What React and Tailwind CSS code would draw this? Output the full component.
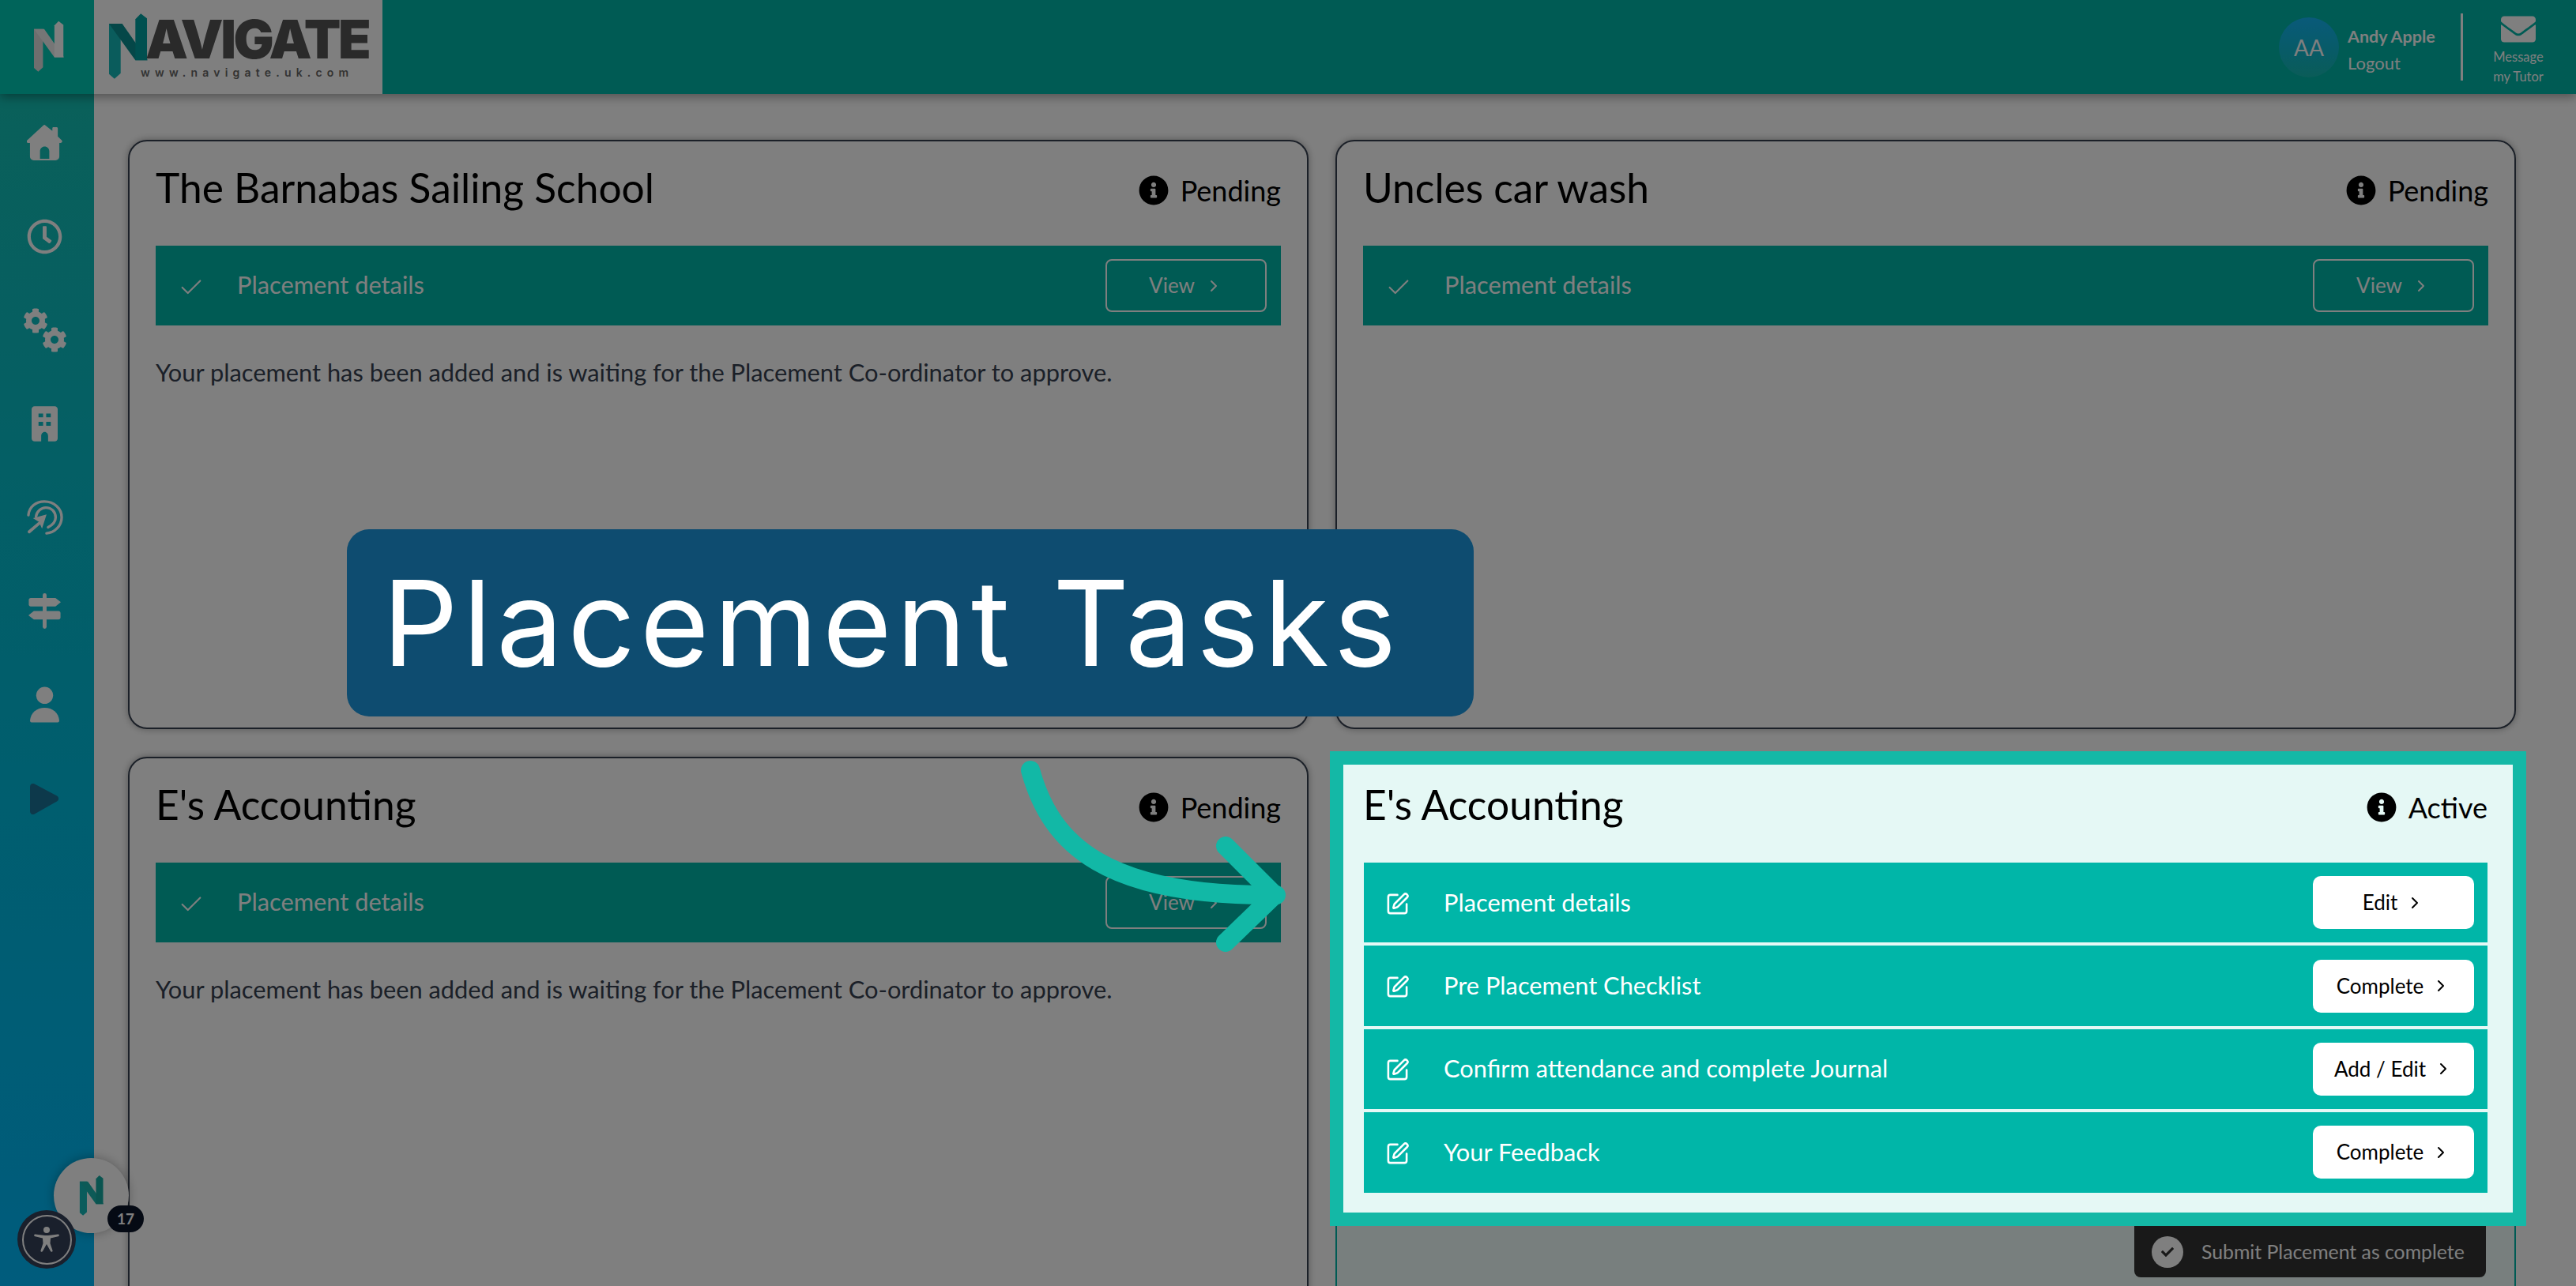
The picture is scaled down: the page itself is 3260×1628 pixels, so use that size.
import { FaRegClock, FaCog, FaInfoCircle, FaEnvelope, FaCheck } from 'react-icons/fa';
import { SquarePen, Check, ChevronRight } from 'lucide-react';

const BODY_FONT = { fontFamily: '"Lato", "Open Sans", sans-serif' };

const HomeIcon = ({ className }) => (
  <svg viewBox="0 0 46 46" className={className} fill="currentColor">
    <path d="M23 0l10 8V4.500c0-1 .8-1.500 1.500-1.500h4c.8 0 1.500.7 1.500 1.500V15l5 5c1.500 1.500.5 3.500-1.500 3.500H42V41c0 2.800-2.200 5-5 5H9c-2.800 0-5-2.200-5-5V23.500H2C0 23.500-1 21.500.5 20L21 1c.6-.6 1.300-1 2-1zM17 34v10h12V34c0-3.300-2.700-6-6-6s-6 2.700-6 6z" fillRule="evenodd" />
  </svg>
);

const CogsIcon = ({ className }) => (
  <div className={`relative h-[56px] w-[56px] ${className}`}>
    <FaCog className="absolute left-0 top-0 text-[32px]" />
    <FaCog className="absolute bottom-0 right-0 text-[32px]" />
  </div>
);

const BuildingIcon = ({ className }) => (
  <svg viewBox="0 0 34 46" className={className} fill="currentColor" fillRule="evenodd">
    <path d="M4 0h26c2.200 0 4 1.800 4 4v38c0 2.200-1.800 4-4 4H4c-2.200 0-4-1.800-4-4V4c0-2.200 1.800-4 4-4zM9 9.500v5h6v-5zM19 9.500v5h6v-5zM9 20.500v5h6v-5zM19 20.500v5h6v-5zM12.500 46h9v-7c0-3-2-5.500-4.500-5.500s-4.500 2.500-4.500 5.500z" />
  </svg>
);

const SignsIcon = ({ className }) => (
  <svg viewBox="0 0 44 46" className={className} fill="currentColor">
    <rect x="19.500" y="0" width="5" height="46" rx="2.500" />
    <path d="M4 6h32l7 5.500-7 5.500H4c-1.500 0-2.500-1-2.500-2.500v-6C1.500 7 2.500 6 4 6z" />
    <path d="M40 23H8l-7 5.500L8 34h32c1.500 0 2.500-1 2.500-2.500v-6C42.500 24 41.500 23 40 23z" />
  </svg>
);

const UserIcon = ({ className }) => (
  <svg viewBox="0 0 38 46" className={className} fill="currentColor">
    <ellipse cx="19" cy="11" rx="11" ry="11" />
    <path d="M2 46c-1.500 0-2-1-2-2.500C1 33 9 27 19 27s18 6 19 16.500c0 1.500-.5 2.500-2 2.500z" />
  </svg>
);

const PlayIcon = ({ className }) => (
  <svg viewBox="0 0 38 40" className={className} fill="currentColor">
    <path d="M0 4C0 1 2.600-.7 5 0l30 16c2.800 1.500 2.800 5.500 0 7L5 40c-2.400.8-5-1-5-4z" />
  </svg>
);

const TargetIcon = ({ className }) => (
  <svg viewBox="0 0 48 46" className={className} fill="none" stroke="currentColor" strokeLinecap="round">
    <path d="M2 20C3 9 12 2 23 2c13 0 23 9 23 21 0 11-9 20-20 21" strokeWidth="3.500" />
    <path d="M12 22c1-7 7-12 13-12 8 0 13 6 13 13 0 6-4 10-10 13" strokeWidth="3.500" />
    <path d="M3 42l13-11" strokeWidth="4" />
    <path d="M8 24l18-5-6 19-4-9z" fill="currentColor" stroke="none" />
  </svg>
);

const AccessIcon = () => (
  <svg viewBox="0 0 32 32" className="h-[38px] w-[32px] text-white" fill="currentColor">
    <circle cx="16" cy="4" r="4" />
    <path d="M1.500 9.500 14 11h4l12.500-1.500c1.800 0 1.800 2.500 0 2.800L21 14.500 20.500 21l3 9c.5 1.800-1.700 2.500-2.500 1l-5-9-5 9c-.8 1.500-3 .8-2.500-1l3-9L11 14.500 1.500 12.300c-1.800-.3-1.800-2.800 0-2.800z" />
  </svg>
);

const LogoN = ({ left, middle, right, className }) => (
  <svg viewBox="0 0 50 86" className={className}>
    <path d="M0 13h15v64l-8 7-7-6z" fill={left} />
    <path d="M0 13h17l33 47H34z" fill={middle} />
    <path d="M34 7l7-7 8 6v54H34z" fill={right} />
  </svg>
);

const navIcons = [
  { icon: HomeIcon, size: 'h-[45px] w-[45px]', color: 'text-white' },
  { icon: FaRegClock, size: 'text-[45px]', color: 'text-white' },
  { icon: CogsIcon, size: '', color: 'text-white' },
  { icon: BuildingIcon, size: 'h-[45px] w-[33px]', color: 'text-white' },
  { icon: TargetIcon, size: 'h-[44px] w-[46px]', color: 'text-white' },
  { icon: SignsIcon, size: 'h-[45px] w-[43px]', color: 'text-white' },
  { icon: UserIcon, size: 'h-[46px] w-[37px]', color: 'text-white' },
  { icon: PlayIcon, size: 'h-[39px] w-[37px]', color: 'text-[#1b7396]' },
];

const Status = ({ label }) => (
  <div className="flex items-center gap-[15px] text-[36px] leading-none text-black">
    <FaInfoCircle className="text-[38px]" />
    <span>{label}</span>
  </div>
);

const DoneRow = () => (
  <div className="flex h-[101px] items-center justify-between bg-[#00b6a8] pl-[28px] pr-[18px] text-white">
    <div className="flex items-center">
      <Check className="mt-[4px] h-[34px] w-[34px]" strokeWidth={1.500} />
      <span className="ml-[41px] text-[30.800px]">Placement details</span>
    </div>
    <button className="flex h-[67px] w-[204px] items-center justify-center gap-[12px] rounded-[8px] border-2 border-white text-[26px] text-white">
      View <ChevronRight className="h-[24px] w-[24px]" strokeWidth={2} />
    </button>
  </div>
);

const Card = ({ title, note }) => (
  <div className="h-[746px] rounded-[24px] border-2 border-[#374151] bg-white px-[33px] pt-[26px] shadow-[0_0_10px_rgba(0,0,0,0.35)]">
    <div className="flex h-[106px] items-start justify-between">
      <h2 className="text-[51.500px] leading-[64px] text-black">{title}</h2>
      <div className="pt-[17px]"><Status label="Pending" /></div>
    </div>
    <DoneRow />
    {note && <p className="mt-[40px] text-[30.800px] leading-[40px] text-[#374151]">{note}</p>}
  </div>
);

const tasks = [
  { label: 'Placement details', action: 'Edit' },
  { label: 'Pre Placement Checklist', action: 'Complete' },
  { label: 'Confirm attendance and complete Journal', action: 'Add / Edit' },
  { label: 'Your Feedback', action: 'Complete' },
];

const NOTE = 'Your placement has been added and is waiting for the Placement Co-ordinator to approve.';

export default function App() {
  return (
    <div className="relative h-screen w-full overflow-hidden bg-white" style={BODY_FONT}>
      {/* top bar */}
      <header className="relative flex h-[119px] items-stretch bg-[#00b6a8] shadow-[0_4px_12px_rgba(0,0,0,0.35)]">
        <div className="flex w-[119px] items-center justify-center bg-[#00c8b4]">
          <LogoN left="#dcdcdc" middle="#ededed" right="#ffffff" className="ml-[4px] h-[67px] w-[38px]" />
        </div>
        <div className="flex w-[365px] flex-col bg-[#ffffff] pl-[19px] pt-[17px]">
          <div className="flex h-[60px] items-start">
            <LogoN left="#14b8b8" middle="#0a8f90" right="#00a0a0" className="h-[85px] w-[49px] shrink-0" />
            <span className="-ml-[3px] mt-[2px] block h-[60px] text-[68px] font-black leading-[60px] tracking-[-3.500px] text-[#555555]" style={{ fontFamily: '"Inter", sans-serif' }}>AVIGATE</span>
          </div>
          <span className="ml-[40px] mt-[8px] block text-[14px] font-semibold leading-none tracking-[6.200px] text-[#666666]" style={{ fontFamily: '"Inter", sans-serif' }}>www.navigate.uk.com</span>
        </div>
        <div className="ml-auto flex items-center pr-[41px] text-white">
          <div className="flex h-[76px] w-[76px] items-center justify-center rounded-full bg-gradient-to-b from-[#14b4f4] to-[#16b8b0] text-[28px]">AA</div>
          <div className="ml-[11px] mt-[6px] flex w-[143px] flex-col">
            <span className="text-[21.500px] font-bold leading-[34px]">Andy Apple</span>
            <span className="text-[22px] leading-[34px]">Logout</span>
          </div>
          <div className="h-[85px] w-[3px] bg-white" />
          <div className="ml-[38px] mt-[5px] flex w-[64px] flex-col items-center">
            <FaEnvelope className="text-[44px]" />
            <span className="mt-[1px] whitespace-nowrap text-[16.500px] leading-[25px]">Message</span>
            <span className="whitespace-nowrap text-[16.500px] leading-[25px]">my Tutor</span>
          </div>
        </div>
      </header>

      <div className="flex h-[calc(100%-119px)]">
        {/* side nav */}
        <nav className="flex w-[119px] shrink-0 flex-col items-center bg-gradient-to-b from-[#14c0b4] to-[#00b8fa] pr-[6px] pt-[2px]">
          {navIcons.map(({ icon: Icon, size, color }, i) => (
            <div key={i} className="flex h-[118.700px] items-center justify-center">
              <Icon className={`${size} ${color}`} />
            </div>
          ))}
        </nav>

        {/* placements */}
        <main className="grid flex-1 grid-cols-[1494px_1494px] gap-x-[34px] gap-y-[35px] self-start pl-[43px] pt-[58px]">
          <Card title="The Barnabas Sailing School" note={NOTE} />
          <Card title="Uncles car wash" />
          <Card title="E's Accounting" note={NOTE} />

          <div className="h-[746px] rounded-[24px] border-2 border-[#00b6a8] bg-[#f0fffc] pl-[8px] pr-[2px] pt-[8px]">
            <div className="relative z-20 h-[567px] bg-[#e5f8f5] px-[26px] pt-[18px] outline-[17px] outline-solid outline-[#14b8a6]">
              <div className="flex h-[106px] items-start justify-between">
                <h2 className="-ml-[1px] text-[51.500px] leading-[64px] text-black">E's Accounting</h2>
                <div className="pt-[17px] pr-[6px]"><Status label="Active" /></div>
              </div>
              <div className="mr-[6px] flex flex-col gap-[4px]">
                {tasks.map((task) => (
                  <div key={task.label} className="flex h-[101.400px] items-center justify-between bg-[#00b6a8] pl-[27px] pr-[17px] text-white">
                    <div className="flex items-center">
                      <SquarePen className="mt-[3px] h-[31px] w-[31px]" strokeWidth={2} />
                      <span className="ml-[43px] text-[30.800px]">{task.label}</span>
                    </div>
                    <button className="flex h-[67px] w-[204px] items-center justify-center gap-[10px] rounded-[10px] bg-white text-[26px] text-black">
                      {task.action} <ChevronRight className="h-[24px] w-[24px]" strokeWidth={2} />
                    </button>
                  </div>
                ))}
              </div>
            </div>
            <div className="ml-[1001px] mt-[17px] flex h-[65px] w-[445px] items-center rounded-b-[8px] bg-[#333333] pl-[22px] text-white">
              <span className="flex h-[40px] w-[40px] shrink-0 items-center justify-center rounded-full bg-white text-[#333333]"><FaCheck className="text-[16px]" /></span>
              <span className="ml-[23px] whitespace-nowrap text-[24.800px]">Submit Placement as complete</span>
            </div>
          </div>
        </main>
      </div>

      {/* help launcher and accessibility button */}
      <div className="absolute left-[68px] top-[1466px] flex h-[95px] w-[95px] items-center justify-center rounded-full bg-white shadow-[0_0_14px_rgba(0,0,0,0.3)]">
        <LogoN left="#14b8b8" middle="#1ab4ae" right="#14a8a0" className="h-[52px] w-[38px]" />
      </div>
      <div className="absolute left-[136px] top-[1526px] flex h-[34px] w-[46px] items-center justify-center rounded-full bg-[#0b1428] text-[19px] font-bold text-white">17</div>
      <div className="absolute left-[22px] top-[1532px] flex h-[74px] w-[74px] items-center justify-center rounded-full bg-[#344058]">
        <div className="flex h-[63px] w-[63px] items-center justify-center rounded-full border-2 border-white">
          <AccessIcon />
        </div>
      </div>

      {/* dim layer for the walkthrough */}
      <div className="absolute inset-0 z-10 bg-black/50" />

      {/* walkthrough callout */}
      <div className="absolute left-[439px] top-[670px] z-30 flex h-[237px] w-[1426px] items-center rounded-[28px] bg-[#0e4c70] pl-[45px]">
        <span className="text-[150px] leading-none tracking-[6px] text-white" style={{ fontFamily: '"Inter", sans-serif' }}>Placement Tasks</span>
      </div>
      <svg className="absolute left-[1280px] top-[950px] z-30 h-[270px] w-[350px]" viewBox="0 0 350 270" fill="none" stroke="#12b8a6" strokeWidth="24" strokeLinecap="round" strokeLinejoin="round">
        <path d="M24 25C50 120 120 185 335 183" />
        <path d="M271 121l62 62-62 60" />
      </svg>
    </div>
  );
}
